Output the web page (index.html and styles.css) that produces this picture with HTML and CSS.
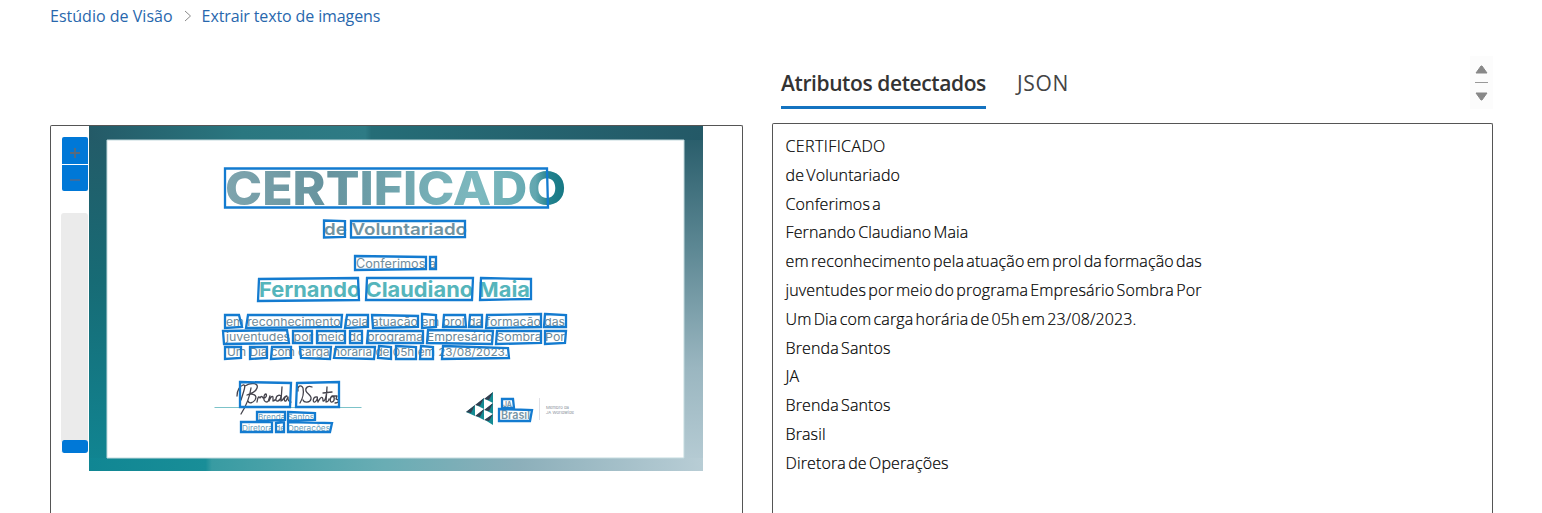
FILE: index.html
```
<!DOCTYPE html>
<html lang="pt-BR">
<head>
<meta charset="utf-8">
<title>Extrair texto de imagens</title>
<link rel="stylesheet" href="styles.css">
</head>
<body>
<nav class="breadcrumb">
  <a class="crumb-home">Estúdio de Visão</a>
  <svg class="chevron" width="8" height="12" viewBox="0 0 8 12"><path d="M1 1l5.500 5L1 11" fill="none" stroke="#8a8a8a"/></svg>
  <a class="crumb-page">Extrair texto de imagens</a>
</nav>
<main class="workspace">
  <section class="viewer">
    <div class="controls">
      <div class="zoom">
        <button class="zoom-in"><svg width="12" height="12" viewBox="0 0 12 12"><path d="M6 1v10M1 6h10" stroke="#5a6a7c" stroke-width="1.800"/></svg></button>
        <button class="zoom-out"><svg width="12" height="12" viewBox="0 0 12 12"><path d="M1 6h10" stroke="#3c6da0" stroke-width="2"/></svg></button>
      </div>
      <div class="slider"><span class="thumb"></span></div>
    </div>
    <svg class="certificate" width="614" height="345" viewBox="89 126 614 345">
      <defs>
        <linearGradient id="left" x1="0" y1="0" x2="0" y2="1"><stop offset="0" stop-color="#245a67"/><stop offset=".45" stop-color="#176b75"/><stop offset="1" stop-color="#108693"/></linearGradient>
        <linearGradient id="top" x1="0" y1="0" x2="1" y2="0"><stop offset="0" stop-color="#245a67"/><stop offset=".25" stop-color="#2a7780"/><stop offset=".45" stop-color="#2e7b85"/><stop offset=".46" stop-color="#256d77"/><stop offset="1" stop-color="#245967"/></linearGradient>
        <linearGradient id="right" x1="0" y1="0" x2="0" y2="1"><stop offset="0" stop-color="#245967"/><stop offset=".35" stop-color="#5c8793"/><stop offset=".7" stop-color="#9ab6c0"/><stop offset="1" stop-color="#b8cdd5"/></linearGradient>
        <linearGradient id="bottom" x1="0" y1="0" x2="1" y2="0"><stop offset="0" stop-color="#108693"/><stop offset=".19" stop-color="#198e98"/><stop offset=".2" stop-color="#389ba2"/><stop offset=".48" stop-color="#69adb4"/><stop offset=".7" stop-color="#8cafba"/><stop offset="1" stop-color="#b8cdd5"/></linearGradient>
        <linearGradient id="title" x1="0" y1="0" x2="1" y2="0"><stop offset="0" stop-color="#7fa5ae"/><stop offset=".3" stop-color="#66939e"/><stop offset=".6" stop-color="#76aeb6"/><stop offset=".75" stop-color="#7db9bf"/><stop offset=".91" stop-color="#63a7b0"/><stop offset=".95" stop-color="#23828e"/><stop offset="1" stop-color="#157783"/></linearGradient>
      </defs>
      <path d="M89 126h18v345H89z" fill="url(#left)"/>
      <path d="M684 126h19v345h-19z" fill="url(#right)"/>
      <path d="M89 126h614v14H89z" fill="url(#top)"/>
      <path d="M89 458h614v13H89z" fill="url(#bottom)"/>
      <path d="M107 140h577v318H107z" fill="#fff" stroke="#c3dade" stroke-width="1"/>
      <g class="cert-text">
        <text class="title" x="225" y="205" textLength="341" lengthAdjust="spacingAndGlyphs">CERTIFICADO</text>
        <text class="subtitle" x="324" y="235" textLength="143" lengthAdjust="spacingAndGlyphs">de Voluntariado</text>
        <text class="grant" x="356" y="268" textLength="80" lengthAdjust="spacingAndGlyphs">Conferimos a</text>
        <text class="name" x="259" y="297" textLength="271" lengthAdjust="spacingAndGlyphs">Fernando Claudiano Maia</text>
        <text class="body" x="226" y="325.500" textLength="339" lengthAdjust="spacingAndGlyphs">em reconhecimento pela atuação em prol da formação das</text>
        <text class="body" x="226" y="341" textLength="339" lengthAdjust="spacingAndGlyphs">juventudes por meio do programa Empresário Sombra Por</text>
        <text class="body" x="227" y="356" textLength="281" lengthAdjust="spacingAndGlyphs">Um Dia com carga horária de 05h em 23/08/2023.</text>
        <text class="signer" x="258" y="419.500" textLength="56" lengthAdjust="spacingAndGlyphs">Brenda Santos</text>
        <text class="signer" x="242" y="430.500" textLength="88" lengthAdjust="spacingAndGlyphs">Diretora de Operações</text>
        <text class="brand-ja" x="503" y="406.500" textLength="9" lengthAdjust="spacingAndGlyphs">JA</text>
        <text class="brand" x="501" y="419" textLength="29" lengthAdjust="spacingAndGlyphs">Brasil</text>
        <text class="member" x="546" y="408.500" textLength="23" lengthAdjust="spacingAndGlyphs">Membro da</text>
        <text class="member" x="546" y="413.500" textLength="28" lengthAdjust="spacingAndGlyphs">JA Worldwide</text>
      </g>
      <path d="M214.500 407.500h147" stroke="#7cc3c9"/>
      <path d="M539.500 398v22" stroke="#e0e0e6"/>
      <g class="signature">
        <path d="M237 396c0-6 3-10 6-11 4-1 0 8-2 15M251 388c-1 7-3 15-10 26M245 386c6-4 14-3 12 2-1 4-7 6-10 7 6-2 11 0 8 5-2 3-6 4-7 1M257 402c1-6 2-6 3-4 1-2 2-2 3 0 3 1 4-3 3-4-2 0-4 8 1 8 2 0 2-5 3-6l-1 5c2-5 4-6 4-3l0 3c1 0 2-1 3-2 0-4 5-5 5-2-1 5-6 5-5 2M282 387l-1 14c3-1 3-6 6-5-4 1-3 6-1 5l2-4c0 3 0 4 3 5"/>
        <path d="M298 391c-1-5 3-7 5-3 1 5 0 10-3 15M312 387c-4-2-7 1-6 4 1 3 6 4 5 8-1 4-7 4-8 1M317 397c-4-1-5 6-2 5 2-1 3-5 2-5l1 5c3-6 5-6 5-1 2 1 4-6 4-14l-1 15c2 0 3-2 3-3M323 393l9-1M333 396c-4 1-3 7-1 6 3-1 3-6 0-6l5 0-1 3c4 1 3 4-1 4"/>
      </g>
      <g class="logo">
        <path d="M493 392v11l-8-4zM484 398v11l-8-4zM493 403v11l-8-4zM475 405v11l-9-4zM484 409v11l-8-4zM493 414v11l-8-5z" fill="#158b93"/>
        <path d="M493 392l-9 7 5 1zM484 398l-9 7 5 1zM493 403l-9 7 5 1zM475 405l-9 7 5 1zM484 409l-9 7 5 1zM493 414l-9 6 5 1z" fill="#313e50"/>
      </g>
      <g class="boxes">
        <path d="M225 168.500L547 168.500 548 207.500 225 207.500zM324 220.500L345 221 345 237 324 237.500zM351 221L465 221 465 237 351 237.500z"/>
        <path d="M355 256L426 257 426 269 355 270zM430 257h6v12h-6z"/>
        <path d="M259 279L358 278 359 300 258 301zM367 278L473 278 472 300 366 300zM481 278L531 279 531 299 480 300z"/>
        <path d="M225 315L239 315 242 327 225 328zM248 315L342 315 341 327 246 328zM347 315L368 315 368 327 345 328zM372 315L418 316 418 327 373 328zM422 314L436 315 436 327 422 328zM444 315L465 315 466 327 443 327zM470 315L482 315 482 327 469 327zM487 315L541 314 541 327 486 328zM545 314L566 315 566 327 544 327z"/>
        <path d="M223 331L287 330 289 343 224 344zM293 331L312 331 312 343 293 343zM317 331L345 331 345 343 317 343zM350 331L362 331 362 343 350 343zM368 331L423 331 423 343 367 343zM428 330L493 331 492 344 427 343zM497 331L541 331 541 343 496 344zM545 331L566 331 565 343 545 344z"/>
        <path d="M225 347L241 347 241 358 225 359zM250 347L267 347 267 358 250 359zM272 347L291 347 291 358 271 359zM300 347L331 347 330 359 301 358zM336 347L375 347 374 359 334 358zM379 346L391 347 391 359 378 358zM396 346L416 347 416 359 396 359zM421 346L433 347 433 359 420 359zM443 346L508 348 509 358 442 359z"/>
        <path d="M240 382L291 383 290 407 240 407zM297 383L339 382 339 407 296 407zM257 412L285 412 285 420 257 421zM288 412L315 413 315 420 288 421zM241 422L272 422 272 432 241 432zM276 423L284 422 284 432 276 432zM288 422L332 423 330 432 288 432z"/>
        <path d="M502 399L513 399 514 408 502 408zM499 409L532 410 530 421 499 421z"/>
      </g>
    </svg>
  </section>
  <section class="results">
    <header class="results-head">
      <div class="tabs"><a class="tab active">Atributos detectados</a><a class="tab json">JSON</a></div>
      <svg class="scroller" width="23" height="53" viewBox="0 0 23 53"><path d="M0 0h23v53H0z" fill="#fcfcfc"/><path d="M6 17l5-7h1l5 7zM6 37h11l-5 7h-1z" fill="#888" stroke="#888" stroke-linejoin="round"/><path d="M5 26.500h13" stroke="#999"/></svg>
    </header>
    <div class="lines">
      <div class="line caps">CERTIFICADO</div>
      <div class="line">de Voluntariado</div>
      <div class="line">Conferimos a</div>
      <div class="line">Fernando Claudiano Maia</div>
      <div class="line">em reconhecimento pela atuação em prol da formação das</div>
      <div class="line">juventudes por meio do programa Empresário Sombra Por</div>
      <div class="line">Um Dia com carga horária de 05h em 23/08/2023.</div>
      <div class="line">Brenda Santos</div>
      <div class="line">JA</div>
      <div class="line">Brenda Santos</div>
      <div class="line">Brasil</div>
      <div class="line">Diretora de Operações</div>
    </div>
  </section>
</main>
</body>
</html>
```
FILE: styles.css
```
* { box-sizing: border-box; }
body { margin: 0; height: 513px; overflow: hidden; background: #fff; font-family: "Open Sans", "Noto Sans", sans-serif; display: flex; flex-direction: column; }
.breadcrumb { flex: none; height: 56px; padding: 5px 0 0 50px; display: flex; align-items: flex-start; font-size: 16px; line-height: 22px; color: #2867ad; }
.crumb-home { letter-spacing: .02px; }
.crumb-page { letter-spacing: -.12px; }
.chevron { margin: 5px 10px 0 11px; }
.workspace { height: 457px; display: flex; align-items: flex-start; padding-left: 50px; gap: 29px; }
.viewer { width: 693px; height: 388px; margin-top: 69px; border: 1px solid #555; border-bottom: 0; border-radius: 2px 2px 0 0; display: flex; align-items: flex-start; }
.controls { width: 38px; padding: 11px 1px 0 10px; display: flex; flex-direction: column; }
.zoom { margin-left: 1px; display: flex; flex-direction: column; gap: 1px; margin-bottom: 22px; }
.zoom button { width: 26px; height: 27px; padding: 5px 0 0; border: 0; background: #0078d7; display: flex; align-items: center; justify-content: center; }
.zoom .zoom-in { border-radius: 2px 2px 0 0; }
.zoom .zoom-out { height: 26px; border-radius: 0 0 2px 2px; padding-top: 4px; }
.slider { width: 27px; height: 240px; background: #ebebeb; border-radius: 3px; display: flex; align-items: flex-end; }
.thumb { width: 27px; height: 13px; border: solid #fff; border-width: 0 0 0 1px; border-radius: 3px; background: #0078d7; }
.certificate { display: block; flex: none; }
.cert-text { font-family: Inter, "Open Sans", sans-serif; }
.title { font-size: 47px; font-weight: 800; fill: url(#title); }
.subtitle { font-size: 16.500px; font-weight: 600; fill: #7193a0; }
.grant { font-size: 12.500px; fill: #728d9c; }
.name { font-size: 20.500px; font-weight: 700; fill: #55b5bb; }
.body { font-size: 11px; fill: #6c8998; }
.signer { font-size: 8px; fill: #6c9db8; }
.brand-ja { font-size: 8px; font-weight: 700; fill: #7f9aa9; }
.brand { font-size: 12px; font-weight: 600; fill: #7897a8; }
.member { font-size: 4px; fill: #8a919c; }
.signature { fill: none; stroke: #45444d; stroke-width: 1.300; stroke-linecap: round; stroke-linejoin: round; }
.boxes { fill: none; stroke: #137bd0; stroke-width: 2.300; }
.results { width: 721px; display: flex; flex-direction: column; }
.results-head { height: 67px; padding-left: 9px; display: flex; justify-content: space-between; align-items: flex-start; }
.tabs { display: flex; gap: 31px; padding-top: 11px; font-size: 21px; line-height: 32px; color: #444; }
.tab { height: 42px; white-space: nowrap; letter-spacing: -.4px; }
.json { letter-spacing: .7px; }
.active { width: 205px; font-weight: 600; color: #333; border-bottom: 3px solid #1473c0; }
.lines { height: 390px; border: 1px solid #555; border-bottom: 0; border-radius: 2px 2px 0 0; padding: 8px 12.500px; font-size: 16px; font-weight: 300; color: #000; letter-spacing: .13px; word-spacing: -2px; -webkit-text-stroke: .2px #000; }
.line { height: 28.800px; line-height: 28.800px; white-space: nowrap; }
.caps { letter-spacing: .4px; }
```
